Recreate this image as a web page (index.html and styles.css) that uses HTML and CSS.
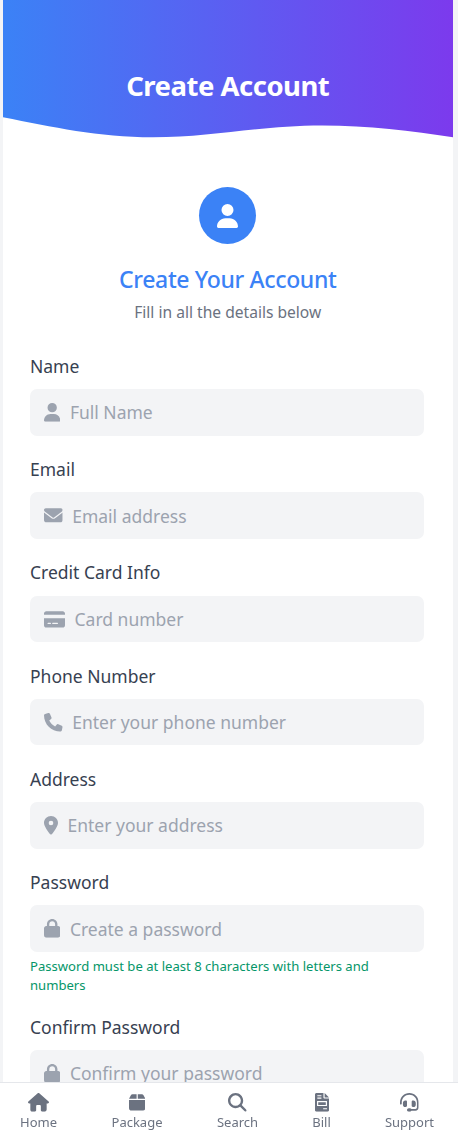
FILE: index.html
```html
<!DOCTYPE html>
<html lang="en">
<head>
<meta charset="utf-8">
<title>Create Account</title>
<link rel="stylesheet" href="styles.css">
</head>
<body>
<svg class="sprite" aria-hidden="true">
  <symbol id="user" viewBox="0 0 448 512"><path d="M224 256A128 128 0 1 0 224 0a128 128 0 1 0 0 256zm-45.700 48C79.800 304 0 383.800 0 482.300C0 498.700 13.300 512 29.700 512H418.300c16.400 0 29.700-13.300 29.700-29.700C448 383.800 368.200 304 269.700 304H178.300z"/></symbol>
  <symbol id="envelope" viewBox="0 0 512 512"><path d="M48 64C21.500 64 0 85.500 0 112c0 15.100 7.100 29.300 19.200 38.400L236.800 313.600c11.400 8.500 27 8.500 38.400 0L492.800 150.400c12.100-9.100 19.200-23.300 19.200-38.400c0-26.500-21.500-48-48-48H48zM0 176V384c0 35.300 28.700 64 64 64H448c35.300 0 64-28.700 64-64V176L294.400 339.200c-22.800 17.100-54 17.100-76.800 0L0 176z"/></symbol>
  <symbol id="card" viewBox="0 0 576 512"><path fill-rule="evenodd" d="M64 32C28.700 32 0 60.700 0 96v32H576V96c0-35.300-28.700-64-64-64H64zM576 224H0V416c0 35.300 28.700 64 64 64H512c35.300 0 64-28.700 64-64V224zM112 352h64c8.800 0 16 7.200 16 16s-7.200 16-16 16H112c-8.800 0-16-7.200-16-16s7.200-16 16-16zm112 16c0-8.800 7.200-16 16-16H368c8.800 0 16 7.200 16 16s-7.200 16-16 16H240c-8.800 0-16-7.200-16-16z"/></symbol>
  <symbol id="phone" viewBox="0 0 512 512"><path d="M164.900 24.600c-7.700-18.600-28-28.500-47.400-23.200l-88 24C12.100 30.200 0 46 0 64C0 311.400 200.600 512 448 512c18 0 33.800-12.100 38.600-29.500l24-88c5.300-19.400-4.600-39.700-23.200-47.400l-96-40c-16.300-6.800-35.200-2.100-46.300 11.600L304.700 368C234.300 334.700 177.300 277.700 144 207.300L193.300 167c13.700-11.200 18.400-30 11.600-46.300l-40-96z"/></symbol>
  <symbol id="pin" viewBox="0 0 384 512"><path fill-rule="evenodd" d="M215.700 499.200C267 435 384 279.400 384 192C384 86 298 0 192 0S0 86 0 192c0 87.400 117 243 168.300 307.200c12.300 15.300 35.100 15.300 47.400 0zM192 128a64 64 0 1 1 0 128 64 64 0 1 1 0-128z"/></symbol>
  <symbol id="lock" viewBox="0 0 448 512"><path fill-rule="evenodd" d="M144 144v48H304V144c0-44.200-35.800-80-80-80s-80 35.800-80 80zM80 192V144C80 64.500 144.500 0 224 0s144 64.500 144 144v48h16c35.300 0 64 28.700 64 64V448c0 35.300-28.700 64-64 64H64c-35.300 0-64-28.700-64-64V256c0-35.300 28.700-64 64-64H80z"/></symbol>
  <symbol id="home" viewBox="0 0 576 512"><path d="M575.800 255.500c0 18-15 32.100-32 32.100h-32l.7 160.200c0 37-28 64.200-56 64.200H392c-22 0-40-18-40-40V360c0-17.700-14.300-32-32-32H256c-17.700 0-32 14.300-32 32V472c0 22-18 40-40 40H120c-30 0-56-26-56-56V287.600H32c-18 0-32-14-32-32.100c0-9 3-17 10-24L266.400 8c7-7 15-8 22-8s15 2 21 7L564.800 231.500c8 7 12 15 11 24z"/></symbol>
  <symbol id="box" viewBox="0 0 448 512"><path d="M50.700 58.500L0 160H208V32H93.700C75.500 32 58.900 42.300 50.700 58.500zM240 160H448L397.300 58.500C389.100 42.300 372.500 32 354.300 32H240V160zM448 192H0V416c0 35.300 28.700 64 64 64H384c35.300 0 64-28.700 64-64V192z"/></symbol>
  <symbol id="search" viewBox="0 0 512 512"><path fill-rule="evenodd" d="M416 208c0 45.900-14.900 88.300-40 122.700L502.600 457.400c12.500 12.500 12.500 32.800 0 45.300s-32.800 12.500-45.300 0L330.700 376c-34.400 25.200-76.800 40-122.700 40C93.100 416 0 322.900 0 208S93.100 0 208 0S416 93.100 416 208zM208 352a144 144 0 1 0 0-288 144 144 0 1 0 0 288z"/></symbol>
  <symbol id="bill" viewBox="0 0 384 512"><path fill-rule="evenodd" d="M40 0H232V128c0 13 11 24 24 24H384V472c0 22-18 40-40 40H40c-22 0-40-18-40-40V40C0 18 18 0 40 0zM264 0V120H384zM64 60V90H176V60zM64 126V156H176V126zM56 220V356H328V220zM88 250H296V326H88zM224 416V448H328V416z"/></symbol>
  <symbol id="headset" viewBox="0 0 512 512"><path d="M256 48C141.100 48 48 141.100 48 256v40c0 13.300-10.700 24-24 24s-24-10.700-24-24V256C0 114.600 114.600 0 256 0S512 114.600 512 256V400.100c0 48.600-39.400 88-88.100 88L313.600 488c-8.300 14.300-23.800 24-41.600 24H240c-26.500 0-48-21.500-48-48s21.500-48 48-48h32c17.800 0 33.300 9.700 41.600 24l110.400.1c22.100 0 40-17.900 40-40V256c0-114.900-93.100-208-208-208zM144 208h16c17.700 0 32 14.300 32 32V352c0 17.700-14.300 32-32 32H144c-35.300 0-64-28.700-64-64V272c0-35.300 28.700-64 64-64zm224 0c35.300 0 64 28.700 64 64v48c0 35.300-28.700 64-64 64H352c-17.700 0-32-14.300-32-32V240c0-17.700 14.300-32 32-32h16z"/></symbol>
</svg>

<main class="card">
  <header class="hero">
    <svg class="wave" viewBox="0 0 451 138" preserveAspectRatio="none" aria-hidden="true">
      <defs><linearGradient id="heroFill"><stop offset="0" stop-color="#3b82f6"/><stop offset="1" stop-color="#7c3aed"/></linearGradient></defs>
      <path fill="url(#heroFill)" d="M0 0V117.300C50 127 95 137.300 150 137.300C210 137.300 255 125.500 320 125.500C365 125.500 410 131 451 137.300V0Z"/>
    </svg>
    <h1 class="hero-title">Create Account</h1>
  </header>

  <section class="intro">
    <div class="avatar"><svg class="avatar-icon"><use href="#user"/></svg></div>
    <h2 class="title">Create Your Account</h2>
    <p class="subtitle">Fill in all the details below</p>
  </section>

  <form class="form">
    <div class="group">
      <label class="label" for="name">Name</label>
      <div class="field"><svg class="icon w-user"><use href="#user"/></svg><input class="input" id="name" placeholder="Full Name"></div>
    </div>
    <div class="group">
      <label class="label" for="email">Email</label>
      <div class="field"><svg class="icon w-square"><use href="#envelope"/></svg><input class="input" id="email" placeholder="Email address"></div>
    </div>
    <div class="group">
      <label class="label" for="cc">Credit Card Info</label>
      <div class="field"><svg class="icon w-card"><use href="#card"/></svg><input class="input" id="cc" placeholder="Card number"></div>
    </div>
    <div class="group">
      <label class="label" for="tel">Phone Number</label>
      <div class="field"><svg class="icon w-square"><use href="#phone"/></svg><input class="input" id="tel" placeholder="Enter your phone number"></div>
    </div>
    <div class="group">
      <label class="label" for="address">Address</label>
      <div class="field"><svg class="icon w-pin"><use href="#pin"/></svg><input class="input" id="address" placeholder="Enter your address"></div>
    </div>
    <div class="group">
      <label class="label" for="pw">Password</label>
      <div class="field"><svg class="icon w-user"><use href="#lock"/></svg><input class="input" id="pw" type="password" placeholder="Create a password"></div>
      <p class="hint">Password must be at least 8 characters with letters and numbers</p>
    </div>
    <div class="group">
      <label class="label" for="pw2">Confirm Password</label>
      <div class="field"><svg class="icon w-user"><use href="#lock"/></svg><input class="input" id="pw2" type="password" placeholder="Confirm your password"></div>
    </div>
  </form>
</main>

<nav class="nav">
  <a class="nav-item home"><svg class="nav-icon w-card"><use href="#home"/></svg>Home</a>
  <a class="nav-item package"><svg class="nav-icon w-user"><use href="#box"/></svg>Package</a>
  <a class="nav-item find"><svg class="nav-icon w-square"><use href="#search"/></svg>Search</a>
  <a class="nav-item bill"><svg class="nav-icon w-pin"><use href="#bill"/></svg>Bill</a>
  <a class="nav-item support"><svg class="nav-icon w-square"><use href="#headset"/></svg>Support</a>
</nav>
</body>
</html>
```

FILE: styles.css
```css
* { box-sizing: border-box; margin: 0; }

body {
  height: 1131px;
  overflow: hidden;
  background: #f3f4f6;
  font-family: "Noto Sans", "Open Sans", sans-serif;
  color: #374151;
}

.sprite { display: none; }

.card {
  width: 450.5px;
  height: 1131px;
  margin-left: 2.5px;
  background: #fff;
  overflow: hidden;
}

.hero {
  display: grid;
  height: 138px;
}
.hero > * { grid-area: 1 / 1; }
.wave { display: block; width: 100%; height: 138px; }
.hero-title {
  padding-top: 67px;
  text-align: center;
  color: #fff;
  font-size: 27.500px;
  line-height: 38px;
  font-weight: 700;
  letter-spacing: -0.500px;
}

.intro {
  display: flex;
  flex-direction: column;
  align-items: center;
  padding-top: 49px;
}
.avatar {
  display: grid;
  place-items: center;
  width: 57px;
  height: 57px;
  border-radius: 50%;
  background: #3b82f6;
  color: #fff;
}
.avatar-icon { width: 21px; height: 24px; fill: currentColor; }
.title {
  margin-top: 19px;
  color: #3b82f6;
  font-size: 23px;
  line-height: 32px;
  font-weight: 500;
  letter-spacing: -0.350px;
}
.subtitle {
  margin-top: 5px;
  color: #6b7280;
  font-size: 15.600px;
  line-height: 24px;
}

.form {
  display: flex;
  flex-direction: column;
  gap: 19.600px;
  padding: 27.900px 29px 0 27.500px;
}
.label {
  display: block;
  margin-bottom: 9.200px;
  font-size: 17.500px;
  line-height: 28px;
}
.field {
  display: flex;
  align-items: center;
  gap: 9.500px;
  height: 46.500px;
  padding: 0 14px;
  border-radius: 7px;
  background: #f3f4f6;
}
.icon { flex: none; height: 18.700px; fill: #9ca3af; }
.w-user { width: 16.400px; }
.w-square { width: 18.700px; }
.w-card { width: 21px; }
.w-pin { width: 14px; }
.input {
  flex: 1;
  min-width: 0;
  padding: 0;
  border: 0;
  outline: 0;
  background: transparent;
  font: 17.500px/28px "Noto Sans", "Open Sans", sans-serif;
}
.input::placeholder { color: #9ca3af; opacity: 1; }
.hint {
  margin-top: 5px;
  margin-bottom: -1px;
  color: #059669;
  font-size: 13.100px;
  line-height: 18.700px;
}

.nav {
  position: fixed;
  left: 0;
  right: 0;
  bottom: 0;
  display: flex;
  justify-content: space-between;
  height: 49px;
  padding: 10px 24px 0 20px;
  border-top: 1px solid #e5e7eb;
  background: #fff;
}
.nav-item {
  display: flex;
  flex-direction: column;
  align-items: center;
  color: #6b7280;
  font-size: 13px;
  line-height: 21px;
  white-space: nowrap;
}
.nav-icon { flex: none; height: 18.700px; fill: #6b7280; }
.home { width: 37px; }
.package { width: 51px; }
.find { width: 41px; }
.bill { width: 18px; }
.support { width: 49px; }
```
